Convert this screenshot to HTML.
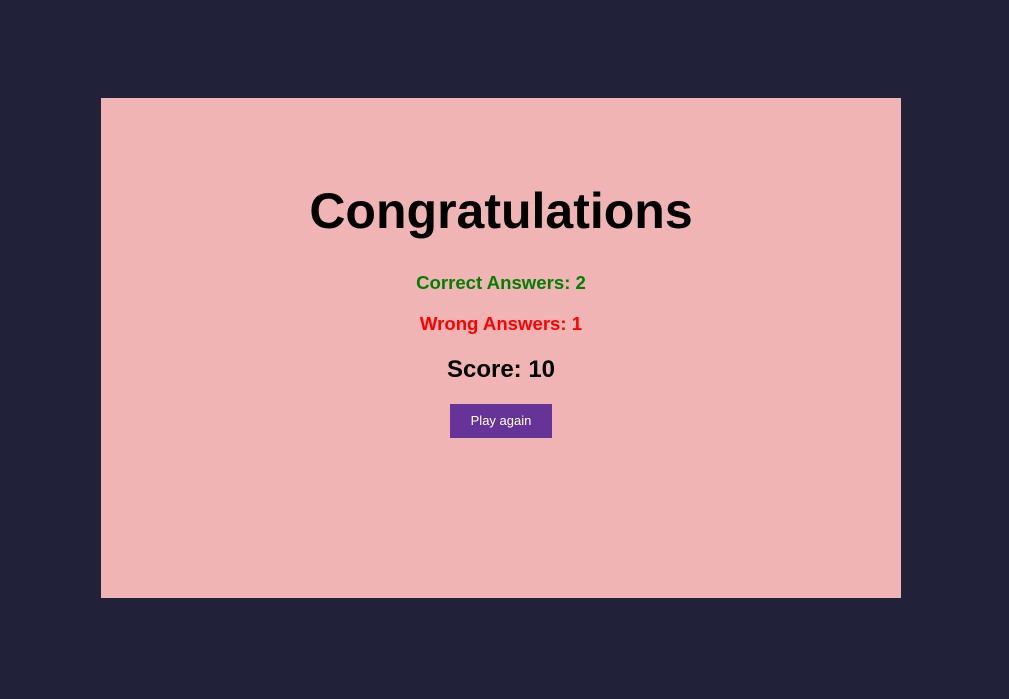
<!DOCTYPE html>
<html><head><style>
html,body{margin:0;padding:0;width:1009px;height:699px;background:#212139;overflow:hidden;font-family:"Liberation Sans",Arial,sans-serif;}
.card{position:absolute;left:101px;top:98px;width:800px;height:500px;background:#f0b4b4;text-align:center;}
.t{position:absolute;left:0;right:0;font-weight:bold;white-space:nowrap;}
h1{position:absolute;left:0;right:0;margin:0;font-size:50px;line-height:60px;top:83px;}
.btn{position:absolute;left:349px;top:306px;width:102px;height:34px;background:#663399;color:#fff;font-size:13px;line-height:34px;}
</style></head><body>
<div class="card">
<h1>Congratulations</h1>
<div class="t" style="top:174px;font-size:18.6px;line-height:22px;color:#008000">Correct Answers: 2</div>
<div class="t" style="top:215px;font-size:18.6px;line-height:22px;color:#ff0000">Wrong Answers: 1</div>
<div class="t" style="top:257px;font-size:24px;line-height:30px;color:#000">Score: 10</div>
<div class="btn">Play again</div>
</div>
</body></html>
